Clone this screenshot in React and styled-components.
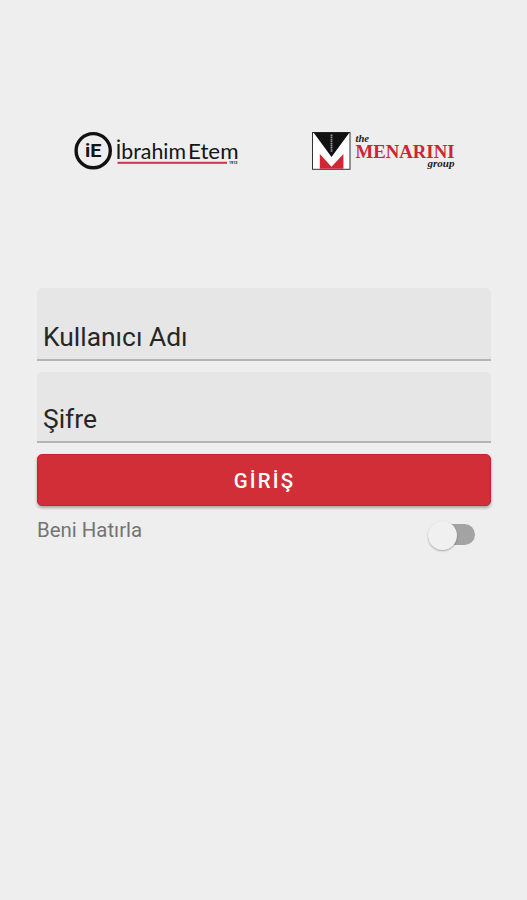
import { useState } from "react";
import styled, { createGlobalStyle } from "styled-components";

const GlobalStyle = createGlobalStyle`
  * {
    box-sizing: border-box;
  }
  body {
    margin: 0;
    background: #eeeeee;
    font-family: Roboto, "Noto Sans", sans-serif;
  }
`;

export default function App() {
  const [remember, setRemember] = useState(false);

  return (
    <Screen>
      <GlobalStyle />
      <Logos>
        <IbrahimEtemLogo />
        <MenariniLogo />
      </Logos>
      <Form onSubmit={(e) => e.preventDefault()}>
        <Field type="text" placeholder="Kullanıcı Adı" $height={73} $top={26} />
        <Field type="password" placeholder="Şifre" $height={71} $top={24} />
        <SubmitButton type="submit">GİRİŞ</SubmitButton>
        <RememberRow>
          <RememberText>Beni Hatırla</RememberText>
          <Switch
            type="button"
            role="switch"
            aria-checked={remember}
            aria-label="Beni Hatırla"
            onClick={() => setRemember(!remember)}
          >
            <Thumb $on={remember} />
          </Switch>
        </RememberRow>
      </Form>
    </Screen>
  );
}

const IbrahimEtemLogo = () => (
  <svg width="166" height="42" viewBox="0 0 166 42">
    <circle cx="19.2" cy="20.7" r="17.1" fill="none" stroke="#111" strokeWidth="3.4" />
    <SansText x="11" y="27" $size={18} $bold textLength="16.5">
      iE
    </SansText>
    <NameText x="41.5" y="29.2" textLength="70.5">
      İbrahim
    </NameText>
    <NameText x="114" y="29.2" textLength="50.5">
      Etem
    </NameText>
    <rect x="43.5" y="31.8" width="109.5" height="2" fill="#c9354b" />
    <SansText x="155" y="34" $size={4} $bold textLength="8.5">
      1912
    </SansText>
  </svg>
);

const MenariniLogo = () => (
  <svg width="144" height="42" viewBox="0 0 144 42">
    <rect x="1.5" y="2.5" width="37.5" height="36.8" fill="#fff" stroke="#333" />
    <path d="M2.5 2.5H38.5L20.5 27Z" fill="#111" />
    <path d="M8.8 38.8V24L20.5 36.8L32.4 24V38.8Z" fill="#d22635" />
    <path d="M20.5 4.5V22" stroke="#999" strokeWidth="1.8" strokeDasharray="1.5 0.6" />
    <SerifText x="44.5" y="12.2" $size={9.5} $italic textLength="13.5">
      the
    </SerifText>
    <SerifText x="44.5" y="27.6" $size={18.3} $red textLength="99">
      MENARINI
    </SerifText>
    <SerifText x="116.5" y="36.6" $size={9.5} $italic textLength="27">
      group
    </SerifText>
  </svg>
);

const LogoText = styled.text.attrs({ lengthAdjust: "spacingAndGlyphs" })`
  fill: #151515;
`;

const SansText = styled(LogoText)`
  font-family: Roboto, sans-serif;
  font-size: ${(p) => p.$size}px;
  font-weight: ${(p) => (p.$bold ? 700 : 400)};
`;

const NameText = styled(LogoText)`
  font-family: Lato, sans-serif;
  font-size: 21.5px;
`;

const SerifText = styled(LogoText)`
  font-family: "Liberation Serif", serif;
  font-size: ${(p) => p.$size}px;
  font-weight: 700;
  font-style: ${(p) => (p.$italic ? "italic" : "normal")};
  fill: ${(p) => (p.$red ? "#cf2435" : "#1b1b1b")};
`;

const Screen = styled.main`
  width: 100%;
  min-height: 900px;
  padding: 130px 36px 0 37px;
  background: #eeeeee;
`;

const Logos = styled.header`
  display: flex;
  justify-content: space-between;
  height: 158px;
  padding: 0 36px 0 37px;
`;

const Form = styled.form`
  display: flex;
  flex-direction: column;
`;

const Field = styled.input`
  width: 100%;
  height: ${(p) => p.$height}px;
  margin: 0 0 11px;
  padding: ${(p) => p.$top}px 6px 0;
  border: 0;
  border-bottom: 2px solid #b4b4b4;
  border-radius: 5px 5px 0 0;
  outline: 0;
  background: #e6e6e6;
  color: #222;
  font-family: inherit;
  font-size: 26.4px;
  &::placeholder {
    color: #262626;
    opacity: 1;
  }
`;

const SubmitButton = styled.button`
  height: 52px;
  padding: 2px 0 0 1px;
  border: 1px solid #c9203a;
  border-radius: 5px;
  background: #d12e38;
  box-shadow: 0 2px 3px rgba(0, 0, 0, 0.3);
  color: #fff;
  font-family: inherit;
  font-size: 20.4px;
  font-weight: 500;
  letter-spacing: 2.2px;
`;

const RememberRow = styled.div`
  display: flex;
  justify-content: space-between;
  padding: 12px 16px 0 0;
`;

const RememberText = styled.span`
  color: #747474;
  font-size: 20.4px;
  line-height: 24px;
`;

const Switch = styled.button`
  display: flex;
  align-items: center;
  width: 42px;
  height: 21px;
  margin-top: 6px;
  padding: 0;
  border: 0;
  border-radius: 11px;
  background: #a3a3a3;
`;

const Thumb = styled.span`
  flex: none;
  width: 29px;
  height: 29px;
  border-radius: 50%;
  background: #f0f0f0;
  box-shadow: 0 1px 2px rgba(0, 0, 0, 0.3);
  transform: translate(${(p) => (p.$on ? 18 : -5)}px, 1px);
`;
